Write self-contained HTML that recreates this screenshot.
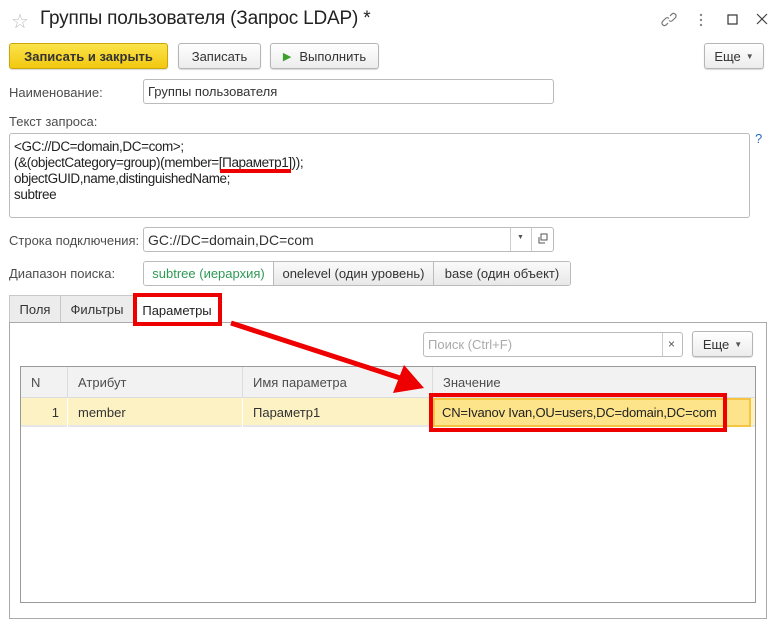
<!DOCTYPE html>
<html><head><meta charset="utf-8"><style>
*{box-sizing:border-box;margin:0;padding:0}
body{width:781px;height:628px;background:#fff;font-family:"Liberation Sans",Arial,sans-serif;font-size:13px;color:#333;position:relative;overflow:hidden}
.a{position:absolute}
.btn{position:absolute;border:1px solid #b5b5b5;border-radius:3px;background:linear-gradient(#fff,#ececec);box-shadow:0 1px 1px rgba(0,0,0,.15);font-size:13px;color:#333;display:flex;align-items:center;justify-content:center}
.inp{position:absolute;border:1px solid #bbb;border-radius:3px;background:#fff;font-size:13px;color:#333;padding-left:4px;display:flex;align-items:center}
.lbl{position:absolute;color:#4d4d4d;font-size:13px}
.th{position:absolute;top:0;height:31px;line-height:31px;padding-left:10px;color:#4d4d4d;border-right:1px solid #dcdcdc}
.td{position:absolute;top:0;height:29px;line-height:29px;padding-left:10px;color:#333;border-right:1px solid #fff}
</style></head><body>
<div class="a" style="left:11px;top:9px;font-size:20px;color:#bbb">☆</div>
<div class="a" style="left:40px;top:8px;font-size:19px;color:#222;letter-spacing:-0.2px">Группы пользователя (Запрос LDAP) *</div>
<svg class="a" style="left:660px;top:10px" width="110" height="20">
<g fill="none" stroke="#777" stroke-width="1.2"><path d="M8 13 l-2 2 a2.5 2.5 0 0 1 -3.5 -3.5 l3 -3 a2.5 2.5 0 0 1 3.5 0"/><path d="M10 6 l2 -2 a2.5 2.5 0 0 1 3.5 3.5 l-3 3 a2.5 2.5 0 0 1 -3.5 0"/></g>
<circle cx="41" cy="5" r="1.2" fill="#888"/><circle cx="41" cy="10" r="1.2" fill="#888"/><circle cx="41" cy="15" r="1.2" fill="#888"/>
<rect x="68" y="5" width="9" height="9" fill="none" stroke="#333" stroke-width="1.2"/>
<path d="M97 4 l10 10 M107 4 l-10 10" stroke="#444" stroke-width="1.2"/>
</svg>
<div class="btn" style="left:9px;top:43px;width:159px;height:26px;background:linear-gradient(#fbe34a,#f2c80f);border-color:#c9a70a;font-weight:bold;color:#333">Записать и закрыть</div>
<div class="btn" style="left:178px;top:43px;width:83px;height:26px">Записать</div>
<div class="btn" style="left:270px;top:43px;width:109px;height:26px"><span style="color:#3aa02a;font-size:11px;margin-right:8px">▶</span>Выполнить</div>
<div class="btn" style="left:704px;top:43px;width:60px;height:26px">Еще <span style="font-size:8px;margin-left:5px;color:#555">▼</span></div>
<div class="lbl" style="left:9px;top:85px">Наименование:</div>
<div class="inp" style="left:143px;top:79px;width:411px;height:25px">Группы пользователя</div>
<div class="lbl" style="left:9px;top:114px">Текст запроса:</div>
<div class="inp" style="left:9px;top:133px;width:741px;height:85px;align-items:flex-start;padding:5px 4px;line-height:16px;font-size:13.5px;color:#222;letter-spacing:-0.4px">&lt;GC://DC=domain,DC=com&gt;;<br>(&amp;(objectCategory=group)(member=[Параметр1]));<br>objectGUID,name,distinguishedName;<br>subtree</div>
<div class="a" style="left:220px;top:169px;width:71px;height:4px;background:#e00"></div>
<div class="a" style="left:755px;top:131px;color:#2a6fc4;font-size:13px">?</div>
<div class="lbl" style="left:9px;top:233px">Строка подключения:</div>
<div class="inp" style="left:143px;top:227px;width:411px;height:25px;font-size:14px">GC://DC=domain,DC=com</div>
<div class="a" style="left:510px;top:228px;width:1px;height:23px;background:#ccc"></div>
<div class="a" style="left:531px;top:228px;width:1px;height:23px;background:#ccc"></div>
<div class="a" style="left:517px;top:234px;font-size:7px;color:#555">▼</div>
<svg class="a" style="left:537px;top:233px" width="12" height="12"><rect x="4" y="1" width="6" height="6" fill="none" stroke="#555"/><path d="M2 4 v6 h6" fill="none" stroke="#555"/></svg>
<div class="lbl" style="left:9px;top:266px">Диапазон поиска:</div>
<div class="a" style="left:143px;top:261px;width:428px;height:25px;border:1px solid #bbb;border-radius:3px;display:flex;overflow:hidden">
<div style="width:130px;background:#fff;color:#2e9a55;display:flex;align-items:center;justify-content:center;border-right:1px solid #bbb">subtree (иерархия)</div>
<div style="width:160px;background:linear-gradient(#fafafa,#e8e8e8);display:flex;align-items:center;justify-content:center;border-right:1px solid #bbb">onelevel (один уровень)</div>
<div style="flex:1;background:linear-gradient(#fafafa,#e8e8e8);display:flex;align-items:center;justify-content:center">base (один объект)</div>
</div>
<div class="a" style="left:9px;top:295px;width:52px;height:28px;background:#ececec;border:1px solid #c8c8c8;border-bottom:none;display:flex;align-items:center;justify-content:center">Поля</div>
<div class="a" style="left:60px;top:295px;width:74px;height:28px;background:#ececec;border:1px solid #c8c8c8;border-bottom:none;display:flex;align-items:center;justify-content:center">Фильтры</div>
<div class="a" style="left:9px;top:322px;width:758px;height:297px;border:1px solid #aaa"></div>
<div class="a" style="left:134px;top:296px;width:86px;height:28px;background:#fff;display:flex;align-items:center;justify-content:center;color:#222">Параметры</div>
<div class="a" style="left:133px;top:293px;width:89px;height:33px;border:4px solid #e00"></div>
<div class="inp" style="left:423px;top:332px;width:260px;height:25px;color:#aaa">Поиск (Ctrl+F)</div>
<div class="a" style="left:662px;top:333px;width:1px;height:23px;background:#ccc"></div>
<div class="a" style="left:668px;top:337px;color:#555;font-size:12px">×</div>
<div class="btn" style="left:692px;top:331px;width:61px;height:26px">Еще <span style="font-size:8px;margin-left:5px;color:#555">▼</span></div>
<div class="a" style="left:20px;top:366px;width:736px;height:237px;border:1px solid #999;background:#fff">
<div class="a" style="left:0;top:0;width:734px;height:31px;background:#f2f2f2;border-bottom:1px solid #ddd">
<div class="th" style="left:0;width:47px">N</div>
<div class="th" style="left:47px;width:175px">Атрибут</div>
<div class="th" style="left:222px;width:190px">Имя параметра</div>
<div class="th" style="left:412px;width:322px;border:none">Значение</div>
</div>
<div class="a" style="left:0;top:31px;width:734px;height:29px;background:#fdf2c4;border-bottom:2px solid #e6e6e6">
<div class="td" style="left:0;width:47px;text-align:right;padding-right:8px">1</div>
<div class="td" style="left:47px;width:175px">member</div>
<div class="td" style="left:222px;width:190px">Параметр1</div>
<div class="td" style="left:412px;width:318px;background:#fde38a;border:2px solid #f5c542;line-height:25px;padding-left:7px;font-size:13px;letter-spacing:-0.2px;color:#222;white-space:nowrap">CN=Ivanov Ivan,OU=users,DC=domain,DC=com</div>
</div>
</div>
<div class="a" style="left:429px;top:393px;width:298px;height:39px;border:4px solid #e00"></div>
<svg class="a" style="left:0;top:0" width="781" height="628"><line x1="231" y1="323" x2="400" y2="378" stroke="#e00" stroke-width="5"/><polygon points="424,388 393,393 404,365" fill="#e00"/></svg>
</body></html>
